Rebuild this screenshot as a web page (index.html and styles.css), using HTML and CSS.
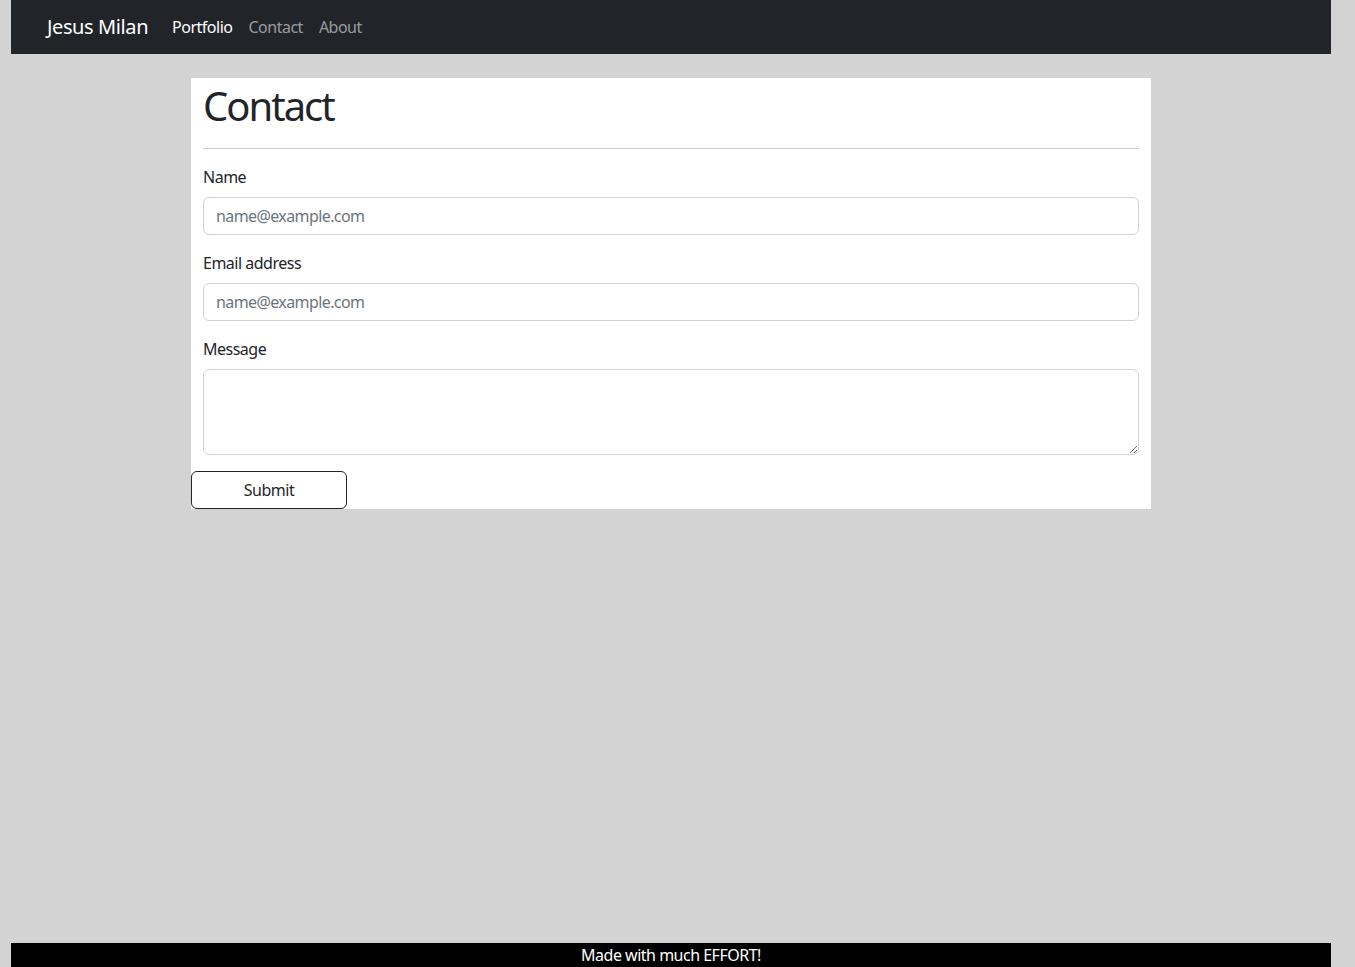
FILE: index.html
```html
<!DOCTYPE html>
<html lang="en">
<head>
<meta charset="utf-8">
<title>Contact</title>
<link rel="stylesheet" href="styles.css">
</head>
<body>
<div class="page">
  <nav class="navbar">
    <a class="brand" href="#">Jesus Milan</a>
    <ul class="nav">
      <li><a class="nav-link active" href="#">Portfolio</a></li>
      <li><a class="nav-link" href="#">Contact</a></li>
      <li><a class="nav-link" href="#">About</a></li>
    </ul>
  </nav>
  <main class="main">
    <section class="card">
      <div class="card-body">
        <h1 class="title">Contact</h1>
        <hr class="rule">
        <div class="field">
          <label class="label" for="name">Name</label>
          <input class="control" id="name" type="text" placeholder="name@example.com">
        </div>
        <div class="field">
          <label class="label" for="email">Email address</label>
          <input class="control" id="email" type="email" placeholder="name@example.com">
        </div>
        <div class="field last">
          <label class="label" for="msg">Message</label>
          <textarea class="control area" id="msg" rows="3"></textarea>
        </div>
      </div>
      <button class="btn" type="button">Submit</button>
    </section>
  </main>
  <footer class="footer">Made with much EFFORT!</footer>
</div>
</body>
</html>
```
FILE: styles.css
```css
* { box-sizing: border-box; }
html, body { margin: 0; padding: 0; }
body {
  background: #d3d3d3;
  font-family: "Noto Sans", "Open Sans", sans-serif;
  font-size: 16px;
  line-height: 1.5;
  letter-spacing: -0.5px;
  color: #212529;
}
.page {
  width: 1320px;
  margin-left: 11px;
  min-height: 967px;
  display: flex;
  flex-direction: column;
}
.navbar {
  height: 54px;
  background: #212529;
  display: flex;
  align-items: center;
  padding-left: 36px;
}
.brand {
  color: #fff;
  text-decoration: none;
  font-size: 20px;
  line-height: 30px;
  letter-spacing: -0.4px;
  margin-right: 16px;
}
.nav {
  list-style: none;
  margin: 0;
  padding: 0;
  display: flex;
}
.nav-link {
  display: block;
  padding: 8px;
  color: rgba(255,255,255,0.55);
  text-decoration: none;
  font-size: 16px;
  line-height: 24px;
}
.nav-link.active { color: #fff; }
.main {
  flex: 1;
  padding-top: 24px;
  display: flex;
  justify-content: center;
  align-items: flex-start;
}
.card {
  width: 960px;
  background: #fff;
}
.card-body {
  padding: 0 12px;
}
.title {
  margin: 0;
  padding-top: 4px;
  font-size: 40px;
  font-weight: 400;
  line-height: 48px;
  letter-spacing: -2px;
}
.rule {
  margin: 18px 0 16px;
  border: 0;
  border-top: 1px solid #c8c9ca;
}
.field { margin-bottom: 16px; }
.label {
  display: block;
  margin-bottom: 8px;
  line-height: 24px;
}
.control {
  display: block;
  width: 100%;
  height: 38px;
  padding: 6px 12px;
  font-family: inherit;
  font-size: 16px;
  line-height: 24px;
  letter-spacing: -0.6px;
  color: #212529;
  background: #fff;
  border: 1px solid #ced4da;
  border-radius: 6px;
  outline: none;
}
.control::placeholder { color: #6c757d; opacity: 1; }
.area { height: 86px; resize: vertical; }
.btn {
  display: block;
  width: 156px;
  height: 38px;
  background: #fff;
  border: 1px solid #212529;
  border-radius: 6px;
  font-family: inherit;
  font-size: 16px;
  line-height: 24px;
  letter-spacing: -0.5px;
  color: #212529;
  padding: 6px 12px;
}
.footer {
  height: 24px;
  background: #000;
  color: #fff;
  text-align: center;
  line-height: 24px;
  font-size: 16px;
}
```
